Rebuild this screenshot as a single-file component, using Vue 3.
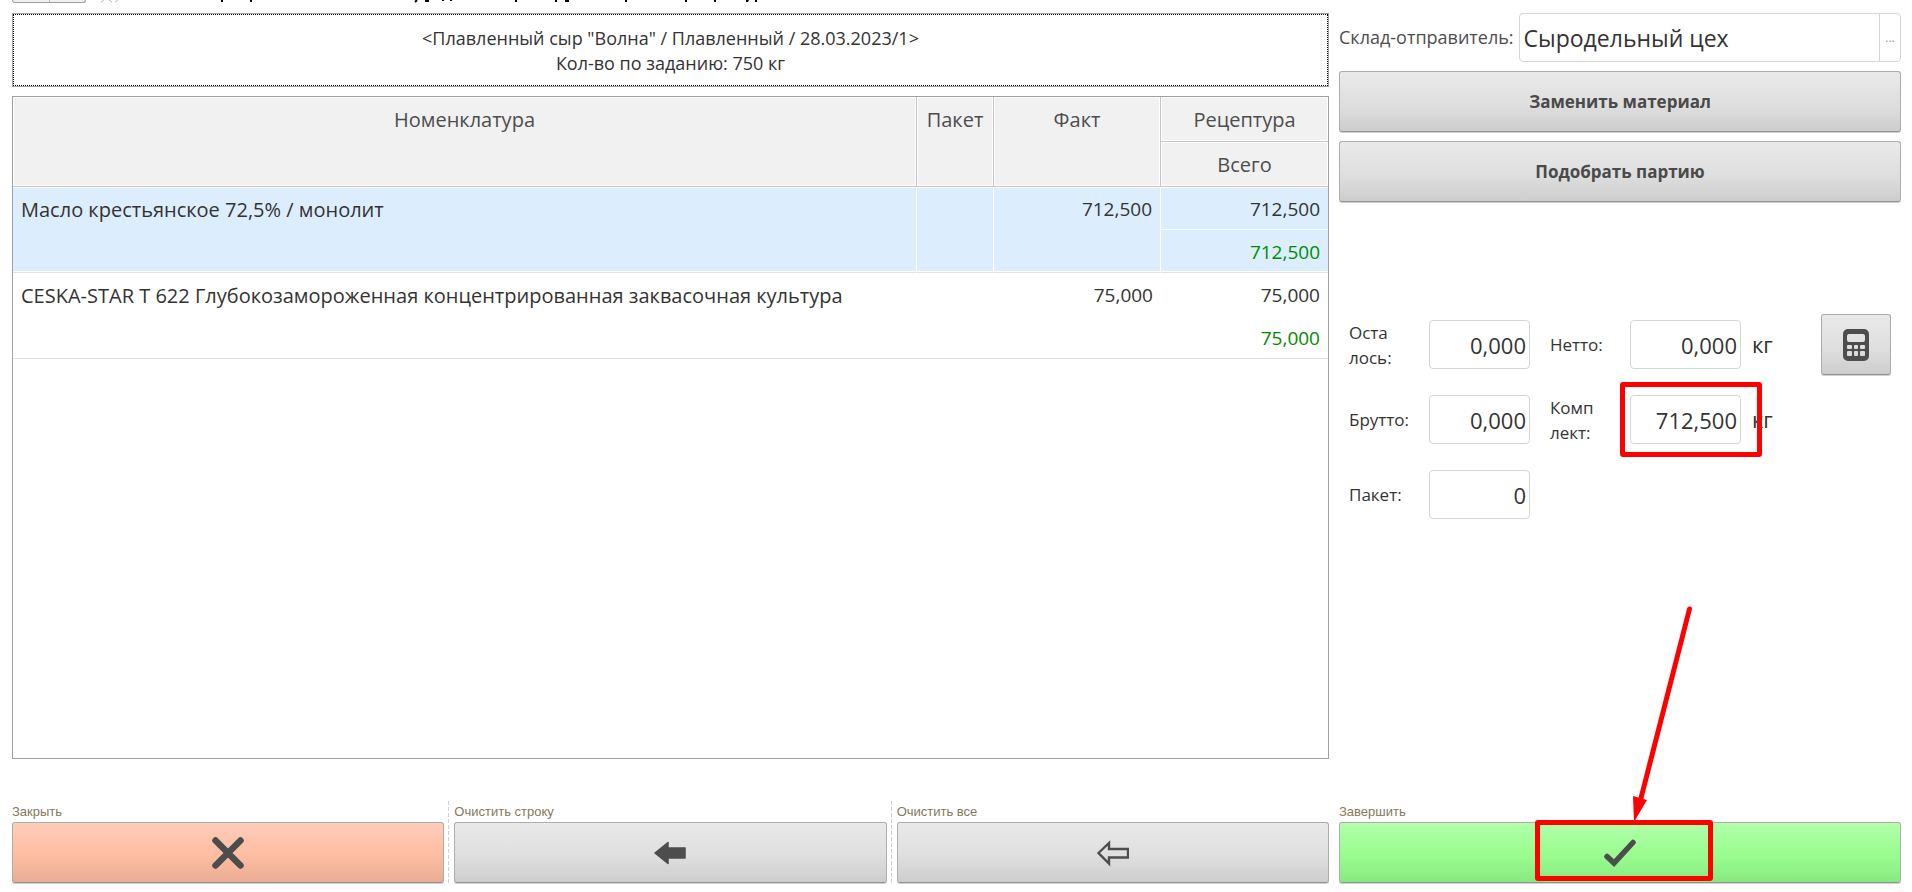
<script setup>
import { ref } from 'vue'

const warehouse = ref('Сыродельный цех')
const remaining = ref('0,000')
const net = ref('0,000')
const gross = ref('0,000')
const kit = ref('712,500')
const pack = ref('0')

const rows = [
  { name: 'Масло крестьянское 72,5% / монолит', pack: '', fact: '712,500', recipe: '712,500', total: '712,500', selected: true },
  { name: 'CESKA-STAR T 622 Глубокозамороженная концентрированная заквасочная культура', pack: '', fact: '75,000', recipe: '75,000', total: '75,000', selected: false },
]
</script>

<template>
  <div class="page">
    <header class="strip">
      <span class="nav-end"></span>
      <svg class="title-tail" width="660" height="3" viewBox="0 0 660 3" aria-hidden="true">
        <path d="M1 2l3-2M9 0l3 2M15 2l3-2" stroke="#bbb" stroke-width="1" fill="none" />
        <path d="M122 0v2M151 0v2M315 2l2-2M327 0v2M343 0v1M351 0v1M416 0v2M456 0v2M526 0v2M586 0v2M615 0v2M656 0v2" stroke="#000" stroke-width="2" fill="none" />
        <path d="M465 0h4v2h-4zM325 0h4v2h-4zM646 0h3l-1 2h-2z" fill="#000" />
      </svg>
    </header>

    <main class="work">
      <section class="left">
        <div class="task">
          <div class="task-inner">
            <div>&lt;Плавленный сыр "Волна" / Плавленный / 28.03.2023/1&gt;</div>
            <div>Кол-во по заданию: 750 кг</div>
          </div>
        </div>
        <div class="table-box">
          <table>
            <colgroup>
              <col />
              <col class="c-pack" />
              <col class="c-fact" />
              <col class="c-recipe" />
            </colgroup>
            <thead>
              <tr>
                <th rowspan="2">Номенклатура</th>
                <th rowspan="2">Пакет</th>
                <th rowspan="2">Факт</th>
                <th>Рецептура</th>
              </tr>
              <tr>
                <th>Всего</th>
              </tr>
            </thead>
            <tbody v-for="row in rows" :key="row.name" :class="{ selected: row.selected }">
              <tr>
                <td rowspan="2">{{ row.name }}</td>
                <td rowspan="2">{{ row.pack }}</td>
                <td rowspan="2" class="num">{{ row.fact }}</td>
                <td class="num upper">{{ row.recipe }}</td>
              </tr>
              <tr>
                <td class="num total">{{ row.total }}</td>
              </tr>
            </tbody>
          </table>
        </div>
      </section>

      <aside class="right">
        <div class="source">
          <label for="warehouse">Склад-отправитель:</label>
          <div class="picker">
            <input id="warehouse" v-model="warehouse" type="text" />
            <button type="button" aria-label="Выбрать склад">...</button>
          </div>
        </div>
        <button type="button" class="btn">Заменить материал</button>
        <button type="button" class="btn">Подобрать партию</button>

        <form class="weights" @submit.prevent>
          <label for="remaining">Оста<br />лось:</label>
          <input id="remaining" v-model="remaining" class="field" type="text" />
          <label for="net" class="second">Нетто:</label>
          <input id="net" v-model="net" class="field" type="text" />
          <span class="unit">кг</span>
          <button type="button" class="btn calc" aria-label="Калькулятор">
            <svg width="26" height="32" viewBox="0 0 26 32">
              <path fill="#4d4d4d" fill-rule="evenodd" d="M5 0h16a5 5 0 0 1 5 5v22a5 5 0 0 1-5 5H5a5 5 0 0 1-5-5V5a5 5 0 0 1 5-5zM6 5a2 2 0 0 0-2 2v4a2 2 0 0 0 2 2h14a2 2 0 0 0 2-2V7a2 2 0 0 0-2-2zM5 16h3a1 1 0 0 1 1 1v2a1 1 0 0 1-1 1H5a1 1 0 0 1-1-1v-2a1 1 0 0 1 1-1zM12 16h2a1 1 0 0 1 1 1v2a1 1 0 0 1-1 1h-2a1 1 0 0 1-1-1v-2a1 1 0 0 1 1-1zM18 16h3a1 1 0 0 1 1 1v2a1 1 0 0 1-1 1h-3a1 1 0 0 1-1-1v-2a1 1 0 0 1 1-1zM5 22h3a1 1 0 0 1 1 1v3a1 1 0 0 1-1 1H5a1 1 0 0 1-1-1v-3a1 1 0 0 1 1-1zM12 22h2a1 1 0 0 1 1 1v3a1 1 0 0 1-1 1h-2a1 1 0 0 1-1-1v-3a1 1 0 0 1 1-1zM18 22h3a1 1 0 0 1 1 1v3a1 1 0 0 1-1 1h-3a1 1 0 0 1-1-1v-3a1 1 0 0 1 1-1z" />
            </svg>
          </button>

          <label for="gross">Брутто:</label>
          <input id="gross" v-model="gross" class="field" type="text" />
          <label for="kit" class="second">Комп<br />лект:</label>
          <div class="marked">
            <input id="kit" v-model="kit" class="field" type="text" />
            <span class="mark mark-kit"></span>
          </div>
          <span class="unit">кг</span>
          <span></span>

          <label for="pack">Пакет:</label>
          <input id="pack" v-model="pack" class="field" type="text" />
        </form>
      </aside>
    </main>

    <footer class="actions">
      <div class="group">
        <div class="action">
          <label for="close">Закрыть</label>
          <button id="close" type="button" class="btn danger">
            <svg width="32" height="32" viewBox="0 0 32 32">
              <path d="M3.500 3.500L28.500 28.500M28.500 3.500L3.500 28.500" stroke="#4d4d4d" stroke-width="6.500" stroke-linecap="round" />
            </svg>
          </button>
        </div>
        <div class="action">
          <label for="clear-row">Очистить строку</label>
          <button id="clear-row" type="button" class="btn">
            <svg width="32" height="32" viewBox="0 0 32 32">
              <path d="M1 16L14 5.500V11H31V21H14V26.500z" fill="#4d4d4d" stroke="#4d4d4d" stroke-width="1.500" stroke-linejoin="round" />
            </svg>
          </button>
        </div>
        <div class="action">
          <label for="clear-all">Очистить все</label>
          <button id="clear-all" type="button" class="btn">
            <svg width="32" height="32" viewBox="0 0 32 32">
              <path d="M1.500 16L12 6V12H31V20.500H12V26.500z" fill="none" stroke="#4d4d4d" stroke-width="2.400" />
            </svg>
          </button>
        </div>
      </div>
      <div class="action finish">
        <label for="finish">Завершить</label>
        <div class="marked">
          <button id="finish" type="button" class="btn success">
            <svg width="32" height="32" viewBox="0 0 32 32">
              <path d="M3 19.500L10 26L29 5.500" fill="none" stroke="#4d4d4d" stroke-width="5.500" stroke-linecap="round" stroke-linejoin="miter" />
            </svg>
          </button>
          <span class="mark mark-finish"></span>
          <svg class="arrow" width="64" height="220" viewBox="0 0 64 220" aria-hidden="true">
            <path d="M59.500 7L10 200" stroke="#f00" stroke-width="5" stroke-linecap="round" />
            <path d="M4 220L3 194L17 198z" fill="#f00" />
          </svg>
        </div>
      </div>
    </footer>
  </div>
</template>

<style>
body {
  background: #fff;
}
</style>

<style scoped>
.page {
  box-sizing: border-box;
  display: flex;
  flex-direction: column;
  min-height: 100vh;
  padding: 0 11px 9px 12px;
  font-family: "Open Sans", "Noto Sans", sans-serif;
  font-size: 17px;
  line-height: 25px;
  color: #333;
}
.page * {
  box-sizing: border-box;
}
button,
input {
  margin: 0;
  font-family: inherit;
  color: inherit;
}
svg {
  display: block;
}
.strip {
  display: flex;
  gap: 14px;
  height: 13px;
}
.nav-end {
  width: 74px;
  height: 3px;
  border: 1px solid #a0a0a0;
  border-top: 0;
  border-radius: 0 0 3px 3px;
  background: linear-gradient(90deg, #f0f0f0 36px, #bbb 36px, #bbb 37px, #f0f0f0 37px);
}
.work {
  flex: 1;
  display: grid;
  grid-template-columns: minmax(0, 1317fr) minmax(0, 562fr);
  gap: 10px;
}
.left {
  display: flex;
  flex-direction: column;
  gap: 9px;
}
.task {
  height: 74px;
  border: 1px solid #a0a0a0;
}
.task-inner {
  height: 100%;
  padding-top: 11px;
  border: 1px dotted #000;
  text-align: center;
  font-size: 18px;
}
.table-box {
  flex: 1;
  border: 1px solid #a0a0a0;
}
table {
  width: 100%;
  table-layout: fixed;
  border-collapse: separate;
  border-spacing: 0;
  font-size: 20px;
}
.c-pack {
  width: 77px;
}
.c-fact,
.c-recipe {
  width: 167px;
}
th {
  height: 45px;
  padding: 10px 0 0;
  vertical-align: top;
  font-weight: 400;
  color: #4d4d4d;
  background: #f1f1f1;
  border-right: 1px solid #c6c6c6;
  border-bottom: 1px solid #c6c6c6;
  box-shadow: inset 0 0 0 1px #fff;
}
tr th:last-child {
  border-right: 0;
}
td {
  height: 43px;
  padding: 10px 8px 0;
  vertical-align: top;
  border-bottom: 1px solid #e2e2e2;
}
td.upper {
  border-bottom-color: transparent;
}
.selected td {
  background: #dceefd;
  box-shadow: inset 0 -1px #fff;
  border-right: 1px solid #fff;
}
.selected td.num:last-child {
  border-right: 0;
}
.selected td.upper {
  border-bottom-color: #fff;
  box-shadow: none;
}
.selected tr:first-child td {
  border-top: 1px solid #fff;
  padding-top: 9px;
}
.num {
  text-align: right;
  font-size: 19px;
}
.total {
  color: #008a00;
}
.right {
  display: flex;
  flex-direction: column;
}
.source {
  display: flex;
  align-items: center;
  gap: 5px;
  height: 49px;
}
.source label {
  font-size: 18px;
  color: #4d4d4d;
}
.picker {
  flex: 1;
  display: flex;
  height: 49px;
  border: 1px solid #d5d5d5;
  border-radius: 4px;
}
.picker input {
  flex: 1;
  min-width: 0;
  padding: 0 0 0 4px;
  border: 0;
  background: transparent;
  font-size: 23px;
}
.picker button {
  width: 21px;
  padding: 0;
  border: 0;
  border-left: 1px solid #d5d5d5;
  background: transparent;
  font-size: 12px;
  color: #999;
}
.btn {
  display: flex;
  align-items: center;
  justify-content: center;
  width: 100%;
  height: 61px;
  padding: 0;
  border: 1px solid #adadad;
  border-bottom-color: #949494;
  border-radius: 3px;
  background: linear-gradient(#e9e9e9, #dfdfdf 55%, #cdcdcd);
  box-shadow: 0 1px #d0d0d0;
  font-size: 17px;
  font-weight: 700;
  color: #4a4a4a;
}
.right > .btn {
  margin-top: 9px;
}
.danger {
  background: linear-gradient(#ffcdb9, #fdbda2 55%, #e9ac94);
}
.success {
  background: linear-gradient(#b2ffaa, #98fd8e 55%, #89e881);
}
.weights {
  display: grid;
  grid-template-columns: 80px 101px 100px 111px 70px 1fr;
  grid-auto-rows: 75px;
  align-items: center;
  margin-top: 105px;
  padding: 0 10px;
}
.second {
  padding-left: 20px;
}
.field {
  display: block;
  width: 100%;
  height: 49px;
  padding: 0 3px;
  border: 1px solid #d5d5d5;
  border-radius: 4px;
  background: transparent;
  font-size: 22px;
  text-align: right;
}
.unit {
  padding-left: 11px;
  font-size: 22px;
}
.calc {
  justify-self: end;
  width: 70px;
}
.marked {
  position: relative;
}
.mark {
  position: absolute;
  border: 5px solid #f00;
  border-radius: 3px;
  pointer-events: none;
}
.mark-kit {
  top: -13px;
  left: -10px;
  width: 142px;
  height: 75px;
}
.mark-finish {
  top: -2px;
  left: calc(50% - 85px);
  width: 178px;
  height: 61px;
}
.arrow {
  position: absolute;
  bottom: 100%;
  left: calc(50% + 10px);
  pointer-events: none;
}
.actions {
  display: grid;
  grid-template-columns: minmax(0, 1317fr) minmax(0, 562fr);
  gap: 10px;
  margin-top: 42px;
  font-family: "Liberation Sans", sans-serif;
  font-size: 13px;
  line-height: 21px;
  color: #84795a;
}
.group {
  display: grid;
  grid-template-columns: repeat(3, 1fr);
  gap: 10px;
}
.action {
  position: relative;
}
.action label {
  display: block;
}
.group .action:not(:last-child)::after {
  content: "";
  position: absolute;
  top: 0;
  right: -5px;
  width: 1px;
  height: 100%;
  background: repeating-linear-gradient(#d0d0d0 0 4px, transparent 4px 6px);
}
</style>
